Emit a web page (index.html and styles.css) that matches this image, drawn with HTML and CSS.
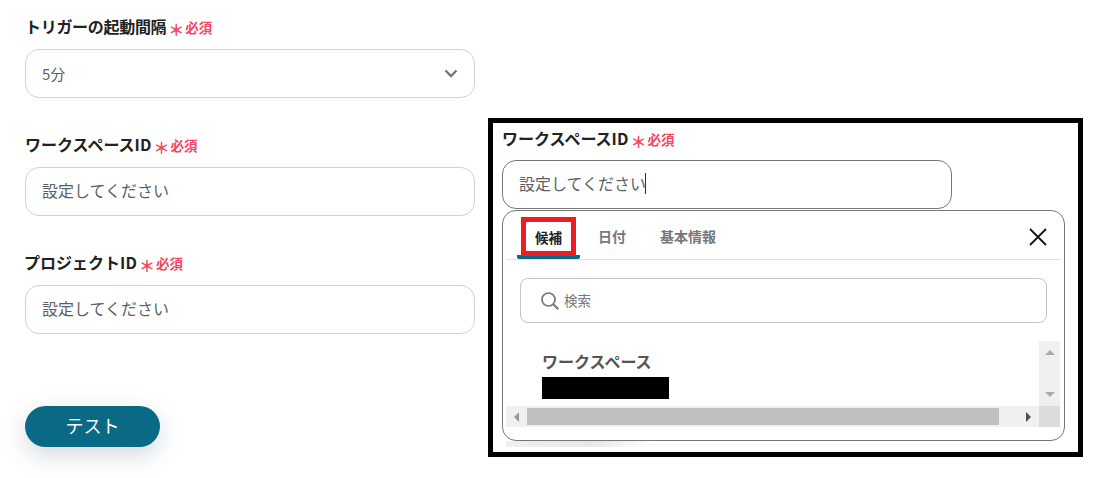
FILE: index.html
```html
<!DOCTYPE html>
<html lang="ja">
<head>
<meta charset="utf-8">
<title>設定</title>
<link rel="stylesheet" href="styles.css">
</head>
<body>
<div class="page">
  <main class="form">
    <div class="field field-first">
      <div class="label"><span class="name name-tight">トリガーの起動間隔</span><span class="star">＊</span><span class="req">必須</span></div>
      <div class="box select"><span>5分</span>
        <svg class="chev" width="14" height="9" viewBox="0 0 14 9"><path d="M1.500 1.500 7 7l5.500-5.500" fill="none" stroke="#777" stroke-width="2.400"/></svg>
      </div>
    </div>
    <div class="field">
      <div class="label"><span class="name">ワークスペース<span class="latin">ID</span></span><span class="star">＊</span><span class="req">必須</span></div>
      <div class="box">設定してください</div>
    </div>
    <div class="field">
      <div class="label label-shift"><span class="name">プロジェクト<span class="latin">ID</span></span><span class="star">＊</span><span class="req">必須</span></div>
      <div class="box">設定してください</div>
    </div>
    <button class="test">テスト</button>
  </main>

  <section class="frame">
    <div class="label label-small"><span class="name">ワークスペース<span class="latin">ID</span></span><span class="star">＊</span><span class="req">必須</span></div>
    <div class="box box-active">設定してください<i class="caret"></i></div>
    <div class="panel">
      <div class="peek"></div>
      <div class="tabs">
        <div class="tab tab-on"><span class="redbox">候補</span></div>
        <div class="tab tab-date">日付</div>
        <div class="tab tab-info">基本情報</div>
        <svg class="close" width="18" height="18" viewBox="0 0 18 18"><path d="M1 1l16 16M17 1 1 17" stroke="#111" stroke-width="1.800" fill="none"/></svg>
      </div>
      <div class="search">
        <svg width="20" height="20" viewBox="0 0 20 20"><circle cx="8.500" cy="8.500" r="6.500" fill="none" stroke="#777" stroke-width="1.700"/><path d="m13.300 13.300 5 5" stroke="#777" stroke-width="2" fill="none"/></svg>
        <span class="search-text">検索</span>
      </div>
      <div class="list">
        <div class="list-main">
          <div class="item-title">ワークスペース</div>
          <div class="redact"></div>
        </div>
        <div class="vbar">
          <svg width="10" height="5" viewBox="0 0 10 5"><path d="M5 0l5 5H0z" fill="#aaa"/></svg>
          <svg width="10" height="5" viewBox="0 0 10 5"><path d="M0 0h10L5 5z" fill="#aaa"/></svg>
        </div>
        <div class="hbar">
          <div class="hleft"><svg width="5" height="10" viewBox="0 0 5 10"><path d="M5 0v10L0 5z" fill="#999"/></svg></div>
          <div class="hthumb"></div>
          <div class="hright"><svg width="5" height="10" viewBox="0 0 5 10"><path d="M0 0v10l5-5z" fill="#505050"/></svg></div>
        </div>
        <div class="corner"></div>
      </div>
    </div>
  </section>
</div>
</body>
</html>
```

FILE: styles.css
```css
* { box-sizing: border-box; }
html, body { margin: 0; padding: 0; background: #fff; }
body {
  width: 1104px;
  height: 478px;
  overflow: hidden;
  font-family: "Noto Sans CJK JP", "Noto Sans", sans-serif;
  color: #555;
}
.page { display: flex; align-items: flex-start; }
.form { width: 488px; padding-left: 25px; flex: none; }
.field { margin-bottom: 35px; }
.field-first { padding-top: 15px; }
.label {
  display: flex;
  align-items: center;
  height: 22px;
  margin-bottom: 12px;
  font-size: 16px;
  line-height: 22px;
  white-space: nowrap;
}
.label-shift { margin-left: -1px; }
.name { font-weight: 700; color: #222; }
.name-tight { letter-spacing: -0.300px; }
.latin { letter-spacing: 0.100px; }
.star { color: #f5455f; font-size: 16px; font-weight: 700; margin-left: 2px; width: 16px; text-align: center; position: relative; top: 3px; }
.req { color: #f5455f; font-size: 13.500px; font-weight: 700; margin-left: 1px; position: relative; top: 1px; }
.box {
  width: 450px;
  height: 49px;
  border: 1px solid #d0d2d6;
  border-radius: 14px;
  padding: 0 16px 3px;
  display: flex;
  align-items: center;
  font-size: 16px;
  color: #5a5f66;
}
.select { justify-content: space-between; font-size: 15px; padding-bottom: 0; }
.test {
  display: block;
  width: 135px;
  height: 41px;
  margin-top: 72px;
  padding: 0 0 4px;
  border: 0;
  border-radius: 21px;
  background: #0a6a85;
  color: #fff;
  font-family: inherit;
  font-size: 18px;
  box-shadow: 0 8px 24px rgba(60, 80, 100, 0.22);
}
.frame {
  width: 595px;
  height: 339px;
  margin-top: 118px;
  flex: none;
  border: 5px solid #000;
  padding: 4px 0 0 9px;
}
.label-small { margin-bottom: 11px; }
.box-active { border-color: #777; }
.caret { display: inline-block; width: 1px; height: 21px; background: #333; margin-left: -1px; }
.panel {
  position: relative;
  width: 563px;
  height: 231px;
  margin-top: 1px;
  border: 1px solid #777;
  border-radius: 14px;
  background: #fff;
  display: flex;
  flex-direction: column;
  padding: 0 3px;
}
.peek {
  position: absolute;
  left: 3px;
  bottom: -7px;
  width: 145px;
  height: 6px;
  background: linear-gradient(to right, #eef1f2 0, #e4e8ea 60%, rgba(228, 232, 234, 0) 100%);
}
.tabs {
  position: relative;
  display: flex;
  height: 49px;
  margin-right: 1px;
  border-bottom: 1px solid #e2e2e2;
  flex: none;
  font-size: 14px;
  font-weight: 700;
  color: #777;
}
.tab { display: flex; align-items: center; justify-content: center; height: 48px; padding-top: 1px; }
.tab-on {
  width: 63px;
  margin-left: 11px;
  padding-top: 0;
  border-bottom: 4px solid #0a6a85;
  align-items: flex-end;
  border-radius: 0 0 2px 2px;
  color: #222;
}
.redbox {
  display: flex;
  align-items: center;
  justify-content: center;
  width: 55px;
  height: 39px;
  margin-bottom: -1px;
  border: 5px solid #ee1c25;
  font-size: 13.500px;
}
.tab-date { margin-left: 18px; }
.tab-info { margin-left: 34px; }
.close { position: absolute; right: 13px; top: 17px; }
.search {
  display: flex;
  align-items: center;
  gap: 4px;
  width: 527px;
  height: 45px;
  margin: 18px 0 0 14px;
  padding-left: 19px;
  border: 1px solid #c4c4c4;
  border-radius: 8px;
  font-size: 13.500px;
  color: #777;
  flex: none;
}
.search-text { margin-bottom: 2px; }
.list {
  display: grid;
  grid-template-columns: 533px 21px;
  grid-template-rows: 65px 21px;
  margin-top: 18px;
  flex: none;
}
.list-main { padding: 8px 0 0 36px; }
.item-title { font-size: 16px; font-weight: 700; color: #555; line-height: 24px; }
.redact { width: 127px; height: 22px; margin-top: 4px; background: #000; }
.vbar {
  background: #f0f0f0;
  display: flex;
  flex-direction: column;
  align-items: center;
  justify-content: space-between;
  padding: 9px 0;
}
.hbar { display: flex; background: #f0f0f0; align-items: center; }
.hleft { width: 21px; display: flex; justify-content: center; }
.hthumb { width: 472px; height: 17px; background: #c0c0c0; }
.hright { flex: 1; display: flex; justify-content: flex-end; padding-right: 8px; }
.corner { background: #dcdcdc; }
```
